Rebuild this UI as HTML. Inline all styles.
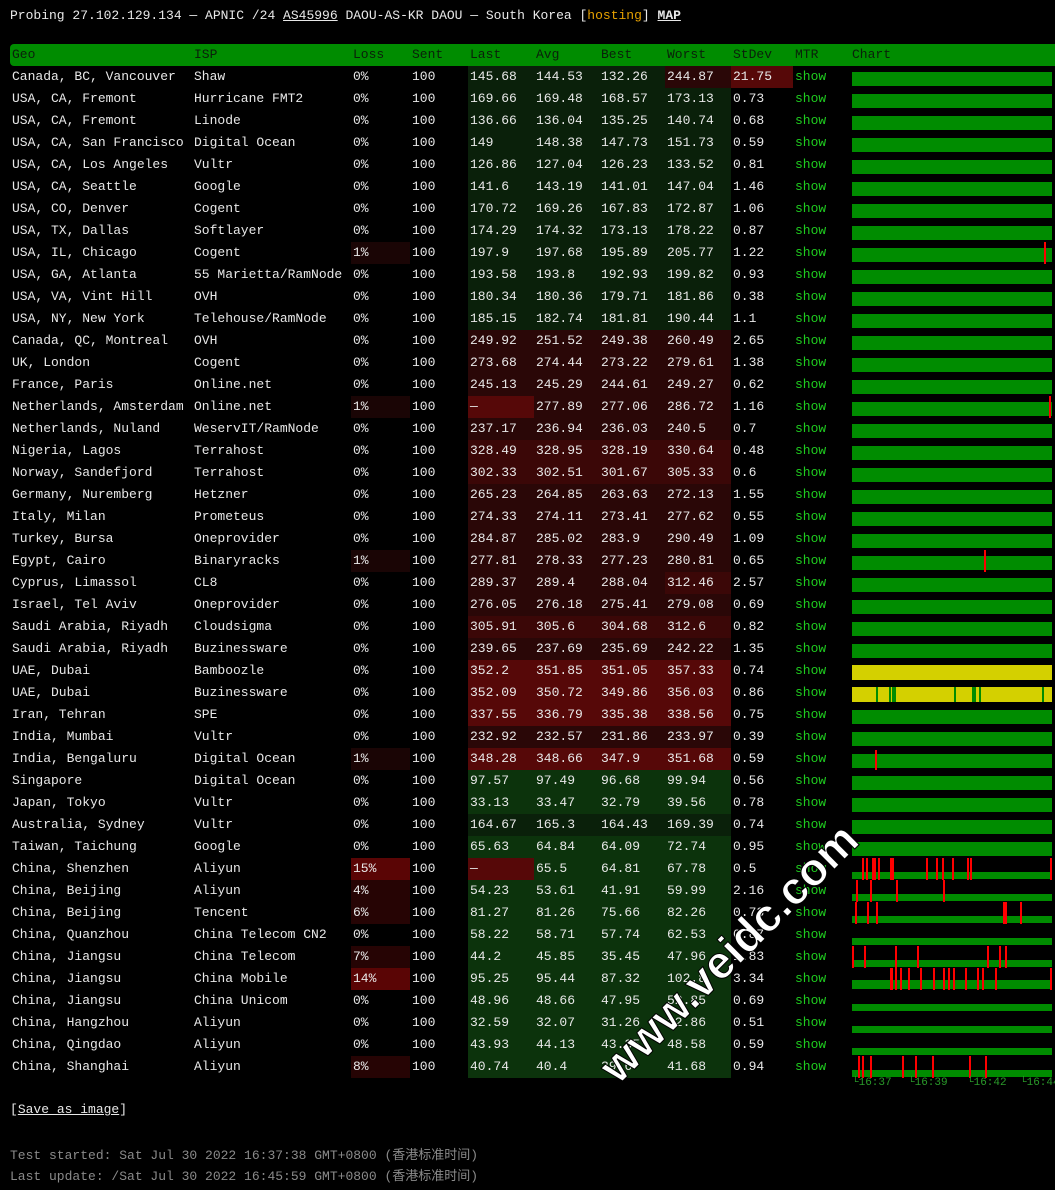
<!DOCTYPE html>
<html><head><meta charset="utf-8"><style>
body{margin:0;background:#000;width:1055px;height:1190px;overflow:hidden;position:relative;font-family:"Liberation Mono","Noto Sans CJK SC",monospace;font-size:13px;color:#e8e8e8}
.top{position:absolute;left:10px;top:8px;white-space:pre}
.top u{color:#e8e8e8}
.hs{color:#e5a000}
table{position:absolute;left:10px;top:44px;border-collapse:collapse;table-layout:fixed;width:1045px}
td{height:22px;padding:0 0 0 2px;white-space:pre;overflow:hidden;line-height:22px}
tr.h td{background:#008c00;color:#0a200a;height:22px}
tr.h td:first-child{border-radius:4px 0 0 4px}
.s{color:#1fcc1f}
.g1{background:#0a200a}.g2{background:#0c330c}.r1{background:#2a0707}.r2{background:#3b0707}.r3{background:#560808}
.l1{background:#1a0505}.l2{background:#260404}.l3{background:#5a0505}
.c{position:relative;padding:0}
.b{position:absolute;left:2px;width:200px;top:6px;height:14px;background:#008c00}
.b.t{top:14px;height:7px}
.y{background:#d4d000}
.k{position:absolute;top:0;height:22px;width:2px;background:#f00}
.v{position:absolute;top:6px;height:14px;width:3px;background:#008c00}
.w{position:absolute;left:588px;top:1055px;transform:rotate(-45deg);transform-origin:left top;font-family:"Liberation Sans",sans-serif;font-weight:bold;font-size:46px;color:#fff;white-space:nowrap;-webkit-text-stroke:1px #000}
.tl{position:absolute;top:1077px;font-size:11px;color:#2a9a2a}
.ft{position:absolute;left:10px;color:#8a8a8a;white-space:pre}
</style></head><body>
<div class="top">Probing 27.102.129.134 — APNIC /24 <u>AS45996</u> DAOU-AS-KR DAOU — South Korea [<span class="hs">hosting</span>] <b><u>MAP</u></b></div>
<table>
<colgroup><col style="width:182px"><col style="width:159px"><col style="width:59px"><col style="width:58px"><col style="width:66px"><col style="width:65px"><col style="width:66px"><col style="width:66px"><col style="width:62px"><col style="width:57px"><col style="width:205px"></colgroup>
<tr class="h"><td>Geo</td><td>ISP</td><td>Loss</td><td>Sent</td><td>Last</td><td>Avg</td><td>Best</td><td>Worst</td><td>StDev</td><td>MTR</td><td>Chart</td></tr>
<tr><td>Canada, BC, Vancouver</td><td>Shaw</td><td>0%</td><td>100</td><td class="g1">145.68</td><td class="g1">144.53</td><td class="g1">132.26</td><td class="r1">244.87</td><td class="r3">21.75</td><td class="s">show</td><td class="c"><div class="b"></div></td></tr>
<tr><td>USA, CA, Fremont</td><td>Hurricane FMT2</td><td>0%</td><td>100</td><td class="g1">169.66</td><td class="g1">169.48</td><td class="g1">168.57</td><td class="g1">173.13</td><td>0.73</td><td class="s">show</td><td class="c"><div class="b"></div></td></tr>
<tr><td>USA, CA, Fremont</td><td>Linode</td><td>0%</td><td>100</td><td class="g1">136.66</td><td class="g1">136.04</td><td class="g1">135.25</td><td class="g1">140.74</td><td>0.68</td><td class="s">show</td><td class="c"><div class="b"></div></td></tr>
<tr><td>USA, CA, San Francisco</td><td>Digital Ocean</td><td>0%</td><td>100</td><td class="g1">149</td><td class="g1">148.38</td><td class="g1">147.73</td><td class="g1">151.73</td><td>0.59</td><td class="s">show</td><td class="c"><div class="b"></div></td></tr>
<tr><td>USA, CA, Los Angeles</td><td>Vultr</td><td>0%</td><td>100</td><td class="g1">126.86</td><td class="g1">127.04</td><td class="g1">126.23</td><td class="g1">133.52</td><td>0.81</td><td class="s">show</td><td class="c"><div class="b"></div></td></tr>
<tr><td>USA, CA, Seattle</td><td>Google</td><td>0%</td><td>100</td><td class="g1">141.6</td><td class="g1">143.19</td><td class="g1">141.01</td><td class="g1">147.04</td><td>1.46</td><td class="s">show</td><td class="c"><div class="b"></div></td></tr>
<tr><td>USA, CO, Denver</td><td>Cogent</td><td>0%</td><td>100</td><td class="g1">170.72</td><td class="g1">169.26</td><td class="g1">167.83</td><td class="g1">172.87</td><td>1.06</td><td class="s">show</td><td class="c"><div class="b"></div></td></tr>
<tr><td>USA, TX, Dallas</td><td>Softlayer</td><td>0%</td><td>100</td><td class="g1">174.29</td><td class="g1">174.32</td><td class="g1">173.13</td><td class="g1">178.22</td><td>0.87</td><td class="s">show</td><td class="c"><div class="b"></div></td></tr>
<tr><td>USA, IL, Chicago</td><td>Cogent</td><td class="l1">1%</td><td>100</td><td class="g1">197.9</td><td class="g1">197.68</td><td class="g1">195.89</td><td class="g1">205.77</td><td>1.22</td><td class="s">show</td><td class="c"><div class="b"></div><div class="k" style="left:194px"></div></td></tr>
<tr><td>USA, GA, Atlanta</td><td>55 Marietta/RamNode</td><td>0%</td><td>100</td><td class="g1">193.58</td><td class="g1">193.8</td><td class="g1">192.93</td><td class="g1">199.82</td><td>0.93</td><td class="s">show</td><td class="c"><div class="b"></div></td></tr>
<tr><td>USA, VA, Vint Hill</td><td>OVH</td><td>0%</td><td>100</td><td class="g1">180.34</td><td class="g1">180.36</td><td class="g1">179.71</td><td class="g1">181.86</td><td>0.38</td><td class="s">show</td><td class="c"><div class="b"></div></td></tr>
<tr><td>USA, NY, New York</td><td>Telehouse/RamNode</td><td>0%</td><td>100</td><td class="g1">185.15</td><td class="g1">182.74</td><td class="g1">181.81</td><td class="g1">190.44</td><td>1.1</td><td class="s">show</td><td class="c"><div class="b"></div></td></tr>
<tr><td>Canada, QC, Montreal</td><td>OVH</td><td>0%</td><td>100</td><td class="r1">249.92</td><td class="r1">251.52</td><td class="r1">249.38</td><td class="r1">260.49</td><td>2.65</td><td class="s">show</td><td class="c"><div class="b"></div></td></tr>
<tr><td>UK, London</td><td>Cogent</td><td>0%</td><td>100</td><td class="r1">273.68</td><td class="r1">274.44</td><td class="r1">273.22</td><td class="r1">279.61</td><td>1.38</td><td class="s">show</td><td class="c"><div class="b"></div></td></tr>
<tr><td>France, Paris</td><td>Online.net</td><td>0%</td><td>100</td><td class="r1">245.13</td><td class="r1">245.29</td><td class="r1">244.61</td><td class="r1">249.27</td><td>0.62</td><td class="s">show</td><td class="c"><div class="b"></div></td></tr>
<tr><td>Netherlands, Amsterdam</td><td>Online.net</td><td class="l1">1%</td><td>100</td><td class="r3">—</td><td class="r1">277.89</td><td class="r1">277.06</td><td class="r1">286.72</td><td>1.16</td><td class="s">show</td><td class="c"><div class="b"></div><div class="k" style="left:199px"></div></td></tr>
<tr><td>Netherlands, Nuland</td><td>WeservIT/RamNode</td><td>0%</td><td>100</td><td class="r1">237.17</td><td class="r1">236.94</td><td class="r1">236.03</td><td class="r1">240.5</td><td>0.7</td><td class="s">show</td><td class="c"><div class="b"></div></td></tr>
<tr><td>Nigeria, Lagos</td><td>Terrahost</td><td>0%</td><td>100</td><td class="r2">328.49</td><td class="r2">328.95</td><td class="r2">328.19</td><td class="r2">330.64</td><td>0.48</td><td class="s">show</td><td class="c"><div class="b"></div></td></tr>
<tr><td>Norway, Sandefjord</td><td>Terrahost</td><td>0%</td><td>100</td><td class="r2">302.33</td><td class="r2">302.51</td><td class="r2">301.67</td><td class="r2">305.33</td><td>0.6</td><td class="s">show</td><td class="c"><div class="b"></div></td></tr>
<tr><td>Germany, Nuremberg</td><td>Hetzner</td><td>0%</td><td>100</td><td class="r1">265.23</td><td class="r1">264.85</td><td class="r1">263.63</td><td class="r1">272.13</td><td>1.55</td><td class="s">show</td><td class="c"><div class="b"></div></td></tr>
<tr><td>Italy, Milan</td><td>Prometeus</td><td>0%</td><td>100</td><td class="r1">274.33</td><td class="r1">274.11</td><td class="r1">273.41</td><td class="r1">277.62</td><td>0.55</td><td class="s">show</td><td class="c"><div class="b"></div></td></tr>
<tr><td>Turkey, Bursa</td><td>Oneprovider</td><td>0%</td><td>100</td><td class="r1">284.87</td><td class="r1">285.02</td><td class="r1">283.9</td><td class="r1">290.49</td><td>1.09</td><td class="s">show</td><td class="c"><div class="b"></div></td></tr>
<tr><td>Egypt, Cairo</td><td>Binaryracks</td><td class="l1">1%</td><td>100</td><td class="r1">277.81</td><td class="r1">278.33</td><td class="r1">277.23</td><td class="r1">280.81</td><td>0.65</td><td class="s">show</td><td class="c"><div class="b"></div><div class="k" style="left:134px"></div></td></tr>
<tr><td>Cyprus, Limassol</td><td>CL8</td><td>0%</td><td>100</td><td class="r1">289.37</td><td class="r1">289.4</td><td class="r1">288.04</td><td class="r2">312.46</td><td>2.57</td><td class="s">show</td><td class="c"><div class="b"></div></td></tr>
<tr><td>Israel, Tel Aviv</td><td>Oneprovider</td><td>0%</td><td>100</td><td class="r1">276.05</td><td class="r1">276.18</td><td class="r1">275.41</td><td class="r1">279.08</td><td>0.69</td><td class="s">show</td><td class="c"><div class="b"></div></td></tr>
<tr><td>Saudi Arabia, Riyadh</td><td>Cloudsigma</td><td>0%</td><td>100</td><td class="r2">305.91</td><td class="r2">305.6</td><td class="r2">304.68</td><td class="r2">312.6</td><td>0.82</td><td class="s">show</td><td class="c"><div class="b"></div></td></tr>
<tr><td>Saudi Arabia, Riyadh</td><td>Buzinessware</td><td>0%</td><td>100</td><td class="r1">239.65</td><td class="r1">237.69</td><td class="r1">235.69</td><td class="r1">242.22</td><td>1.35</td><td class="s">show</td><td class="c"><div class="b"></div></td></tr>
<tr><td>UAE, Dubai</td><td>Bamboozle</td><td>0%</td><td>100</td><td class="r3">352.2</td><td class="r3">351.85</td><td class="r3">351.05</td><td class="r3">357.33</td><td>0.74</td><td class="s">show</td><td class="c"><div class="b y" style="top:5px;height:15px"></div></td></tr>
<tr><td>UAE, Dubai</td><td>Buzinessware</td><td>0%</td><td>100</td><td class="r3">352.09</td><td class="r3">350.72</td><td class="r3">349.86</td><td class="r3">356.03</td><td>0.86</td><td class="s">show</td><td class="c"><div class="b y" style="top:5px;height:15px"></div><div class="v" style="left:26px;top:5px;height:15px;width:2px"></div><div class="v" style="left:39px;top:5px;height:15px;width:2px"></div><div class="v" style="left:42px;top:5px;height:15px;width:4px"></div><div class="v" style="left:104px;top:5px;height:15px;width:2px"></div><div class="v" style="left:122px;top:5px;height:15px;width:4px"></div><div class="v" style="left:129px;top:5px;height:15px;width:2px"></div><div class="v" style="left:192px;top:5px;height:15px;width:2px"></div></td></tr>
<tr><td>Iran, Tehran</td><td>SPE</td><td>0%</td><td>100</td><td class="r3">337.55</td><td class="r3">336.79</td><td class="r3">335.38</td><td class="r3">338.56</td><td>0.75</td><td class="s">show</td><td class="c"><div class="b"></div></td></tr>
<tr><td>India, Mumbai</td><td>Vultr</td><td>0%</td><td>100</td><td class="r1">232.92</td><td class="r1">232.57</td><td class="r1">231.86</td><td class="r1">233.97</td><td>0.39</td><td class="s">show</td><td class="c"><div class="b"></div></td></tr>
<tr><td>India, Bengaluru</td><td>Digital Ocean</td><td class="l1">1%</td><td>100</td><td class="r3">348.28</td><td class="r3">348.66</td><td class="r3">347.9</td><td class="r3">351.68</td><td>0.59</td><td class="s">show</td><td class="c"><div class="b"></div><div class="v y" style="left:12px;width:2px"></div><div class="v y" style="left:40px;width:2px"></div><div class="v y" style="left:130px;width:2px"></div><div class="k" style="left:25px;top:2px;height:20px"></div></td></tr>
<tr><td>Singapore</td><td>Digital Ocean</td><td>0%</td><td>100</td><td class="g2">97.57</td><td class="g2">97.49</td><td class="g2">96.68</td><td class="g2">99.94</td><td>0.56</td><td class="s">show</td><td class="c"><div class="b"></div></td></tr>
<tr><td>Japan, Tokyo</td><td>Vultr</td><td>0%</td><td>100</td><td class="g2">33.13</td><td class="g2">33.47</td><td class="g2">32.79</td><td class="g2">39.56</td><td>0.78</td><td class="s">show</td><td class="c"><div class="b"></div></td></tr>
<tr><td>Australia, Sydney</td><td>Vultr</td><td>0%</td><td>100</td><td class="g1">164.67</td><td class="g1">165.3</td><td class="g1">164.43</td><td class="g1">169.39</td><td>0.74</td><td class="s">show</td><td class="c"><div class="b"></div></td></tr>
<tr><td>Taiwan, Taichung</td><td>Google</td><td>0%</td><td>100</td><td class="g2">65.63</td><td class="g2">64.84</td><td class="g2">64.09</td><td class="g2">72.74</td><td>0.95</td><td class="s">show</td><td class="c"><div class="b"></div></td></tr>
<tr><td>China, Shenzhen</td><td>Aliyun</td><td class="l3">15%</td><td>100</td><td class="r3">—</td><td class="g2">65.5</td><td class="g2">64.81</td><td class="g2">67.78</td><td>0.5</td><td class="s">show</td><td class="c"><div class="b t"></div><div class="k" style="left:12px"></div><div class="k" style="left:16px"></div><div class="k" style="left:22px;width:4px"></div><div class="k" style="left:28px"></div><div class="k" style="left:40px;width:4px"></div><div class="k" style="left:76px"></div><div class="k" style="left:86px"></div><div class="k" style="left:92px"></div><div class="k" style="left:102px"></div><div class="k" style="left:117px"></div><div class="k" style="left:120px"></div><div class="k" style="left:200px"></div></td></tr>
<tr><td>China, Beijing</td><td>Aliyun</td><td class="l2">4%</td><td>100</td><td class="g2">54.23</td><td class="g2">53.61</td><td class="g2">41.91</td><td class="g2">59.99</td><td>2.16</td><td class="s">show</td><td class="c"><div class="b t"></div><div class="k" style="left:6px"></div><div class="k" style="left:20px"></div><div class="k" style="left:46px"></div><div class="k" style="left:93px"></div></td></tr>
<tr><td>China, Beijing</td><td>Tencent</td><td class="l2">6%</td><td>100</td><td class="g2">81.27</td><td class="g2">81.26</td><td class="g2">75.66</td><td class="g2">82.26</td><td>0.73</td><td class="s">show</td><td class="c"><div class="b t"></div><div class="k" style="left:5px"></div><div class="k" style="left:17px"></div><div class="k" style="left:26px"></div><div class="k" style="left:153px;width:4px"></div><div class="k" style="left:170px"></div></td></tr>
<tr><td>China, Quanzhou</td><td>China Telecom CN2</td><td>0%</td><td>100</td><td class="g2">58.22</td><td class="g2">58.71</td><td class="g2">57.74</td><td class="g2">62.53</td><td>0.87</td><td class="s">show</td><td class="c"><div class="b t"></div></td></tr>
<tr><td>China, Jiangsu</td><td>China Telecom</td><td class="l2">7%</td><td>100</td><td class="g2">44.2</td><td class="g2">45.85</td><td class="g2">35.45</td><td class="g2">47.96</td><td>1.83</td><td class="s">show</td><td class="c"><div class="b t"></div><div class="k" style="left:2px"></div><div class="k" style="left:14px"></div><div class="k" style="left:45px"></div><div class="k" style="left:67px"></div><div class="k" style="left:137px"></div><div class="k" style="left:149px"></div><div class="k" style="left:155px"></div></td></tr>
<tr><td>China, Jiangsu</td><td>China Mobile</td><td class="l3">14%</td><td>100</td><td class="g2">95.25</td><td class="g2">95.44</td><td class="g2">87.32</td><td class="g2">102.8</td><td>3.34</td><td class="s">show</td><td class="c"><div class="b t" style="top:12px;height:9px"></div><div class="k" style="left:40px;width:3px"></div><div class="k" style="left:45px"></div><div class="k" style="left:50px"></div><div class="k" style="left:58px"></div><div class="k" style="left:70px"></div><div class="k" style="left:83px"></div><div class="k" style="left:93px"></div><div class="k" style="left:98px"></div><div class="k" style="left:103px"></div><div class="k" style="left:115px"></div><div class="k" style="left:127px"></div><div class="k" style="left:132px"></div><div class="k" style="left:145px"></div><div class="k" style="left:200px"></div></td></tr>
<tr><td>China, Jiangsu</td><td>China Unicom</td><td>0%</td><td>100</td><td class="g2">48.96</td><td class="g2">48.66</td><td class="g2">47.95</td><td class="g2">52.85</td><td>0.69</td><td class="s">show</td><td class="c"><div class="b t"></div></td></tr>
<tr><td>China, Hangzhou</td><td>Aliyun</td><td>0%</td><td>100</td><td class="g2">32.59</td><td class="g2">32.07</td><td class="g2">31.26</td><td class="g2">32.86</td><td>0.51</td><td class="s">show</td><td class="c"><div class="b t"></div></td></tr>
<tr><td>China, Qingdao</td><td>Aliyun</td><td>0%</td><td>100</td><td class="g2">43.93</td><td class="g2">44.13</td><td class="g2">43.35</td><td class="g2">48.58</td><td>0.59</td><td class="s">show</td><td class="c"><div class="b t"></div></td></tr>
<tr><td>China, Shanghai</td><td>Aliyun</td><td class="l2">8%</td><td>100</td><td class="g2">40.74</td><td class="g2">40.4</td><td class="g2">39.6</td><td class="g2">41.68</td><td>0.94</td><td class="s">show</td><td class="c"><div class="b t"></div><div class="k" style="left:8px"></div><div class="k" style="left:12px"></div><div class="k" style="left:20px"></div><div class="k" style="left:52px"></div><div class="k" style="left:65px"></div><div class="k" style="left:82px"></div><div class="k" style="left:119px"></div><div class="k" style="left:135px"></div></td></tr>
</table>
<div class="tl" style="left:852px">└16:37</div>
<div class="tl" style="left:908px">└16:39</div>
<div class="tl" style="left:967px">└16:42</div>
<div class="tl" style="left:1020px">└16:44</div>
<div class="ft" style="top:1102px;color:#e8e8e8">[<u>Save as image</u>]</div>
<div class="ft" style="top:1144px">Test started: Sat Jul 30 2022 16:37:38 GMT+0800 (香港标准时间)</div>
<div class="ft" style="top:1165px">Last update: /Sat Jul 30 2022 16:45:59 GMT+0800 (香港标准时间)</div>
<div class="w">www.veidc.com</div>
</body></html>
